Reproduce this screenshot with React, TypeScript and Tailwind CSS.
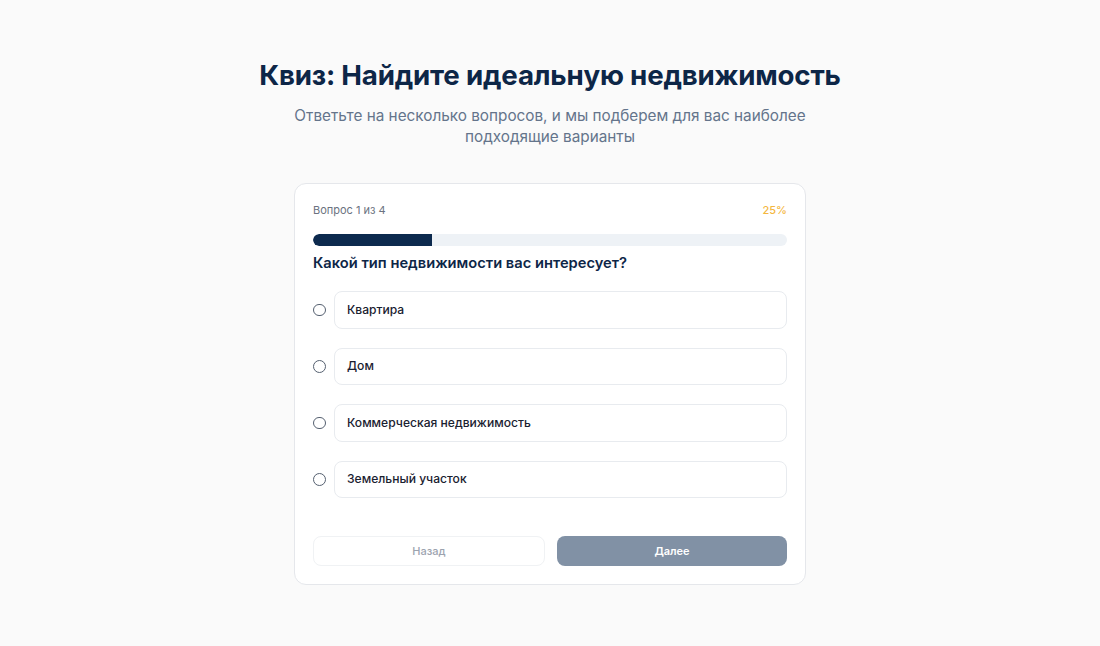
import React from "react";

const options = ["Квартира", "Дом", "Коммерческая недвижимость", "Земельный участок"];

export default function App() {
  return (
    <div
      className="min-h-screen w-full bg-[#fafafa] flex flex-col items-center pt-[59px]"
      style={{ fontFamily: "Inter, 'Noto Sans', sans-serif" }}
    >
      <div className="flex flex-col items-center">
        <h1 className="text-[27.7px] leading-[33px] font-bold text-[#0d2647] text-center tracking-[-0.2px]">
          Квиз: Найдите идеальную недвижимость
        </h1>
        <p className="mt-[12.5px] max-w-[520px] text-center text-[15.3px] leading-[21.6px] text-[#64748b]">
          Ответьте на несколько вопросов, и мы подберем для вас наиболее подходящие варианты
        </p>
        <div className="mt-[35px] w-[512px] bg-white border border-[#e5e7eb] rounded-xl px-[18px] pt-[19px] pb-[18px]">
          <div className="flex items-center justify-between text-[11px] leading-[15px]">
            <span className="text-[#6b7280]">Вопрос 1 из 4</span>
            <span className="text-[#f4b73f] font-medium">25%</span>
          </div>
          <div className="mt-[16.5px] h-[11.5px] w-full rounded-full bg-[#eef2f6] overflow-hidden">
            <div className="h-full w-1/4 rounded-l-full bg-[#0d2a4e]" />
          </div>
          <h2 className="mt-[6px] text-[14.7px] leading-[22px] font-semibold text-[#0d2647]">
            Какой тип недвижимости вас интересует?
          </h2>
          <div className="mt-[17.5px] flex flex-col gap-[19px]">
            {options.map((o) => (
              <div key={o} className="flex items-center">
                <span className="w-[12.5px] h-[12.5px] rounded-full border border-[#556070] bg-white shrink-0" />
                <div className="ml-[8.5px] flex-1 h-[37.5px] flex items-center px-3 rounded-lg border border-[#e8ebef] bg-white text-[12.1px] font-medium text-[#1a2130]">
                  {o}
                </div>
              </div>
            ))}
          </div>
          <div className="mt-[37.5px] flex gap-3">
            <button className="flex-1 h-[30.7px] rounded-lg border border-[#f0f2f4] bg-white text-[11px] font-medium text-[#9ca3af]">
              Назад
            </button>
            <button className="flex-1 h-[30.7px] rounded-lg bg-[#8191a5] text-[11px] font-semibold text-white">
              Далее
            </button>
          </div>
        </div>
      </div>
    </div>
  );
}
